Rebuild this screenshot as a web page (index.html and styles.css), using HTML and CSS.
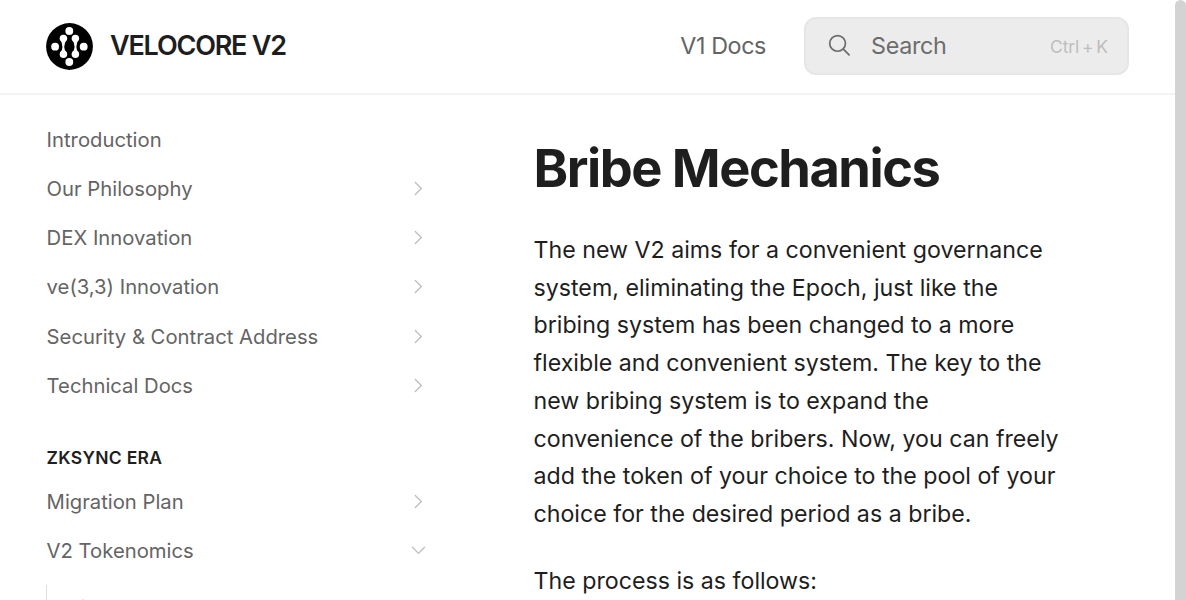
FILE: index.html
```html
<!DOCTYPE html>
<html lang="en">
<head>
<meta charset="utf-8">
<title>Bribe Mechanics - VELOCORE V2</title>
<link rel="stylesheet" href="styles.css">
</head>
<body>
<svg class="sprites" aria-hidden="true">
  <symbol id="chevron" viewBox="0 0 16 16"><path d="M5 2.3 10.7 8 5 13.7" fill="none" stroke="currentColor" stroke-width="1.2" stroke-linecap="round" stroke-linejoin="round"/></symbol>
</svg>
<div class="page">
  <header class="header">
    <a class="brand">
      <svg class="logo" viewBox="0 0 48 48">
        <circle cx="24" cy="24" r="23.9" fill="#000"/>
        <g fill="#fff">
          <circle cx="23.8" cy="8.2" r="4"/><circle cx="23.8" cy="39.8" r="4"/>
          <circle cx="9.3" cy="24.2" r="4"/><circle cx="38.5" cy="24.2" r="4"/>
          <circle cx="17.8" cy="15.7" r="3.8"/><circle cx="17.8" cy="32" r="3.8"/>
          <circle cx="30" cy="15.7" r="3.8"/><circle cx="30" cy="32" r="3.8"/>
          <path d="M15 17.5Q18.4 24 15 30.2h5.6Q16.8 24 20.6 17.5zM32.8 17.5Q29.4 24 32.8 30.2h-5.6Q31 24 27.2 17.5z"/>
        </g>
      </svg>
      <span class="brand-name">VELOCORE V2</span>
    </a>
    <a class="header-link">V1 Docs</a>
    <div class="search">
      <svg class="search-icon" viewBox="0 0 24 24"><g fill="none" stroke="currentColor" stroke-width="1.8" stroke-linecap="round"><circle cx="10" cy="9.8" r="8.2"/><path d="m16 15.8 6 5.9"/></g></svg>
      <span class="search-label">Search</span>
      <span class="shortcut">Ctrl + K</span>
    </div>
  </header>
  <div class="body">
    <nav class="sidebar">
      <a class="item">Introduction</a>
      <a class="item">Our Philosophy<svg class="chevron"><use href="#chevron"/></svg></a>
      <a class="item">DEX Innovation<svg class="chevron"><use href="#chevron"/></svg></a>
      <a class="item">ve(3,3) Innovation<svg class="chevron"><use href="#chevron"/></svg></a>
      <a class="item">Security &amp; Contract Address<svg class="chevron"><use href="#chevron"/></svg></a>
      <a class="item">Technical Docs<svg class="chevron"><use href="#chevron"/></svg></a>
      <h2 class="group">ZKSYNC ERA</h2>
      <a class="item">Migration Plan<svg class="chevron"><use href="#chevron"/></svg></a>
      <a class="item">V2 Tokenomics<svg class="chevron open"><use href="#chevron"/></svg></a>
      <div class="children"><a class="item child">Airdrop</a></div>
    </nav>
    <main class="content">
      <h1 class="title">Bribe Mechanics</h1>
      <p class="text">The new V2 aims for a convenient governance system, eliminating the Epoch, just like the bribing system has been changed to a more flexible and convenient system. The key to the new bribing system is to expand the convenience of the bribers. Now, you can freely add the token of your choice to the pool of your choice for the desired period as a bribe.</p>
      <p class="text">The process is as follows:</p>
    </main>
  </div>
</div>
<div class="scrollbar"></div>
</body>
</html>
```

FILE: styles.css
```css
* { box-sizing: border-box; margin: 0; padding: 0; }
body { display: flex; height: 600px; overflow: hidden; background: #fff; color: #1e1e1e; font-family: Inter, "Liberation Sans", sans-serif; }
.sprites { display: none; }
.page { flex: 1; min-width: 0; height: 600px; overflow: hidden; }
.scrollbar { width: 11px; height: 640px; border-radius: 6px; background: #d3d3d3; }
.header { display: flex; align-items: center; height: 94.5px; padding: 0 46px 1px 46px; border-bottom: 2px solid #f3f3f3; }
.brand { display: flex; align-items: center; gap: 17px; margin: 2px auto 0 0; }
.logo { width: 47px; height: 47px; }
.brand-name { margin-top: -2px; font-size: 27px; font-weight: 600; letter-spacing: -1.2px; }
.header-link { margin-right: 38px; color: #646464; font-size: 23.3px; letter-spacing: -0.4px; }
.search { display: flex; align-items: center; width: 325px; height: 58px; padding: 0 19px 0 22px; border: 2px solid #e6e6e6; border-radius: 12px; background: #ececec; color: #6c6c6c; }
.search-icon { width: 23px; height: 23px; margin-right: 20px; }
.search-label { flex: 1; font-size: 23.3px; letter-spacing: -0.3px; }
.shortcut { padding-top: 1px; color: #bdbdbd; font-size: 17.5px; letter-spacing: -0.1px; word-spacing: -2px; }
.body { display: flex; }
.sidebar { flex: none; width: 434.5px; padding: 20.2px 0 0 46px; }
.item { display: flex; align-items: center; justify-content: space-between; height: 49.2px; padding: 0 8px 0 0.6px; color: #646464; font-size: 20.25px; letter-spacing: 0; }
.chevron { width: 17px; height: 17px; color: #bdbdbd; }
.open { transform: rotate(90deg); }
.group { height: 20px; margin: 37.8px 0 9px; padding-left: 0.6px; line-height: 20px; font-size: 17.5px; font-weight: 600; letter-spacing: 0.3px; }
.children { margin-top: 10px; border-left: 1px solid #dedede; padding-left: 19px; }
.child { height: 45.6px; }
.content { width: 536px; margin-left: 99px; padding-top: 41px; }
.title { height: 64px; line-height: 64px; margin-bottom: 32.3px; font-size: 52.4px; font-weight: 700; letter-spacing: -1.48px; white-space: nowrap; }
.text { margin-bottom: 29.3px; font-size: 23.2px; line-height: 37.75px; }
```
